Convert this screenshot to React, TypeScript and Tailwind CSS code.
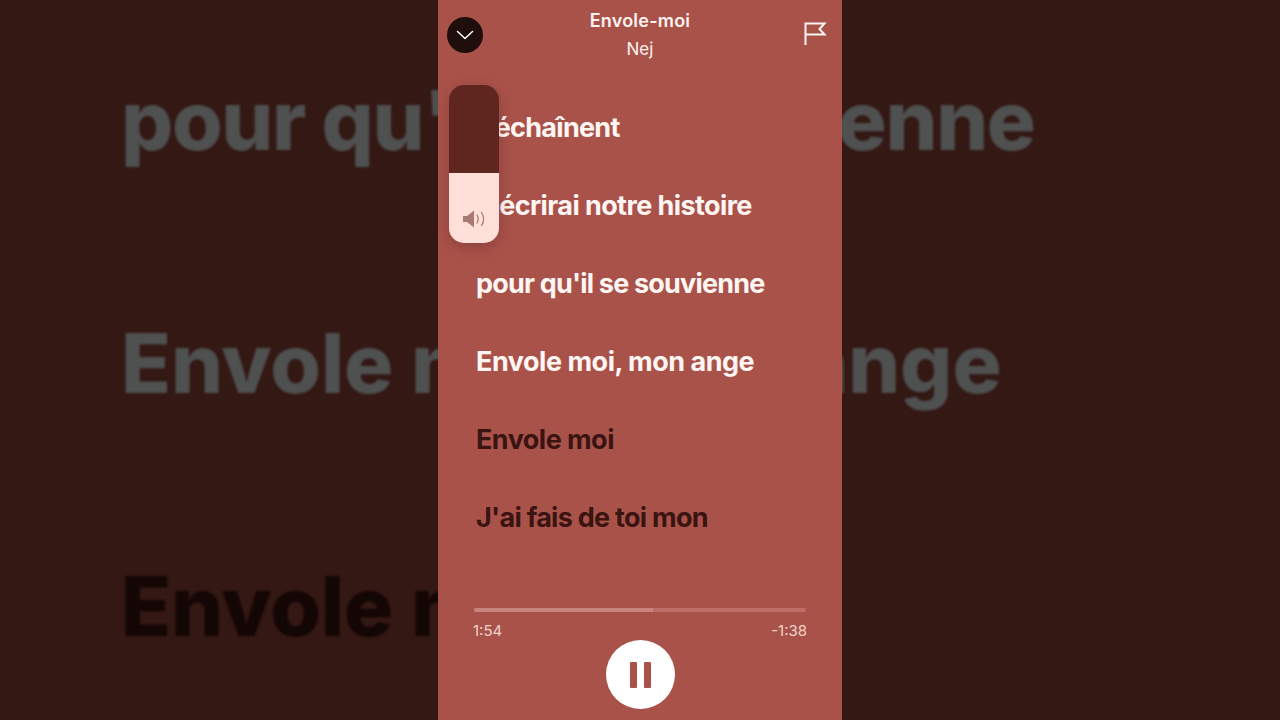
import React from 'react';

const lyrics = [
  { text: 'Déchaînent', done: true, tracking: 'tracking-[-0.027em]' },
  { text: "J'écrirai notre histoire", done: true, tracking: 'tracking-[-0.022em]' },
  { text: "pour qu'il se souvienne", done: true, tracking: 'tracking-[-0.03em]' },
  { text: 'Envole moi, mon ange', done: true, tracking: 'tracking-[-0.018em]' },
  { text: 'Envole moi', done: false, tracking: 'tracking-[-0.02em]' },
  { text: "J'ai fais de toi mon", done: false, tracking: 'tracking-[-0.027em]' },
];

const backdropLines = [
  { text: "pour qu'il se souvienne", color: 'text-[#4f5050]', tracking: 'tracking-[-0.017em]' },
  { text: 'Envole moi, mon ange', color: 'text-[#4f5050]', tracking: 'tracking-[-0.0015em]' },
  { text: 'Envole moi', color: 'text-[#140604]', tracking: 'tracking-[-0.0015em]' },
];

function Backdrop() {
  return (
    <div className="absolute inset-0 flex flex-col gap-[125px] pl-[121px] pt-[62px] blur-[1px]">
      {backdropLines.map((line, i) => (
        <div
          key={i}
          className={`h-[118px] whitespace-nowrap text-[82px] leading-[118px] font-extrabold ${line.tracking} ${line.color}`}
        >
          {line.text}
        </div>
      ))}
    </div>
  );
}

function VolumeSlider() {
  return (
    <div className="absolute left-[11px] top-[85px] flex h-[158px] w-[50px] flex-col overflow-hidden rounded-[15px] shadow-[0_4px_14px_rgba(60,20,15,0.25)]">
      <div className="h-[88px] bg-[#5f2620]" />
      <div className="flex flex-1 items-end justify-center bg-[#ffe0d8] pb-[14px]">
        <svg width="25" height="20" viewBox="0 0 25 20" fill="none">
          <path d="M1 7h4l7-5.500v17L5 13H1z" fill="#a97a74" />
          <path d="M15 6c1.500 2.500 1.500 5.500 0 8" stroke="#a97a74" strokeWidth="1.300" strokeLinecap="round" />
          <path d="M19.500 3.500c2.600 4 2.600 9 0 13" stroke="#a97a74" strokeWidth="1.300" strokeLinecap="round" />
        </svg>
      </div>
    </div>
  );
}

function Header() {
  return (
    <div className="grid h-[72px] grid-cols-[1fr_auto_1fr] items-start px-[9px]">
      <div className="mt-[17px] flex h-[36px] w-[36px] items-center justify-center rounded-full bg-[#200e0d]">
        <svg width="18" height="10" viewBox="0 0 18 10" fill="none">
          <path d="M1.500 1.500 9 8.500l7.500-7" stroke="#ffffff" strokeWidth="1.500" strokeLinecap="round" strokeLinejoin="round" />
        </svg>
      </div>
      <div className="flex flex-col items-center pt-[10px] text-[#fdf3f0]">
        <div className="text-[18px] leading-[22px] font-semibold tracking-[0.012em]">Envole-moi</div>
        <div className="mt-[6px] text-[17px] leading-[22px] font-normal">Nej</div>
      </div>
      <svg className="mt-[21px] mr-[6px] justify-self-end" width="24" height="25" viewBox="0 0 24 25" fill="none">
        <path d="M2.500 24V2.500H21.500L16.500 8 21.500 13.500H2.500" stroke="#fdf3f0" strokeWidth="2" strokeLinejoin="miter" />
      </svg>
    </div>
  );
}

function Player() {
  return (
    <div className="mt-auto flex flex-col px-[36px]">
      <div className="flex h-[4px] overflow-hidden rounded-full bg-[#bd6e67]">
        <div className="w-[179px] bg-[#ca847e]" />
      </div>
      <div className="-mx-[1px] mt-[10px] flex justify-between text-[15px] leading-[18px] text-[#f2d2cb]">
        <span>1:54</span>
        <span>-1:38</span>
      </div>
      <div className="mb-[11px] flex justify-center">
        <div className="flex h-[69px] w-[69px] items-center justify-center gap-[7px] rounded-full bg-white">
          <div className="h-[26px] w-[7px] rounded-[1px] bg-[#a9524a]" />
          <div className="h-[26px] w-[7px] rounded-[1px] bg-[#a9524a]" />
        </div>
      </div>
    </div>
  );
}

export default function App() {
  return (
    <div className="relative h-[720px] w-full overflow-hidden bg-[#331814] font-['Inter',sans-serif]">
      <Backdrop />
      <div className="relative mx-auto flex h-full w-[404px] flex-col bg-[#a9524a]">
        <Header />
        <div className="flex flex-col gap-[42px] pl-[38px] pt-[38px]">
          {lyrics.map((line) => (
            <div
              key={line.text}
              className={`h-[36px] text-[27px] leading-[36px] font-bold ${line.tracking} ${
                line.done ? 'text-[#fff6f3]' : 'text-[#3a1411]'
              }`}
            >
              {line.text}
            </div>
          ))}
        </div>
        <Player />
        <VolumeSlider />
      </div>
    </div>
  );
}
